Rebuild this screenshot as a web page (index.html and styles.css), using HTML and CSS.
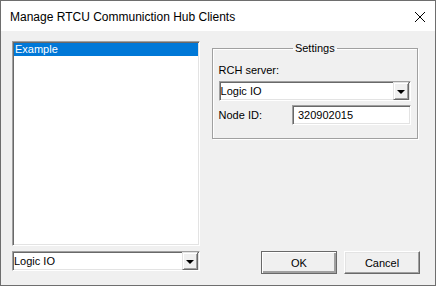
FILE: index.html
```html
<!DOCTYPE html>
<html>
<head>
    <title>Manage RTCU Communiction Hub Clients</title>
    <meta charset=utf-8>
    <link rel="stylesheet" href="styles.css">
</head>
<body>
    <div class="window">
        <div class="titlebar">
            <span class="title">Manage RTCU Communiction Hub Clients</span>
            <svg class="close" width="12" height="12" viewBox="0 0 12 12">
                <path d="M1 1L11 11M11 1L1 11" stroke="#000" stroke-width="1" fill="none"/>
            </svg>
        </div>
        <div class="client">
            <div class="left">
                <div class="listbox">
                    <div class="item selected">Example</div>
                </div>
                <div class="combo">
                    <span class="combo-text">Logic IO</span>
                    <span class="combo-btn"><i class="arrow"></i></span>
                </div>
            </div>
            <div class="right">
                <fieldset class="group">
                    <legend>Settings</legend>
                    <div class="label">RCH server:</div>
                    <div class="combo">
                        <span class="combo-text">Logic IO</span>
                        <span class="combo-btn"><i class="arrow"></i></span>
                    </div>
                    <div class="row">
                        <span class="label">Node ID:</span>
                        <div class="edit">320902015</div>
                    </div>
                </fieldset>
                <div class="buttons">
                    <button class="btn default">OK</button>
                    <button class="btn">Cancel</button>
                </div>
            </div>
        </div>
    </div>
</body>
</html>
```

FILE: styles.css
```css
body{
    margin: 0;
    font-family: "Liberation Sans", Arial, sans-serif;
    font-size: 11px;
    color: #000;
}
.window{
    width: 436px;
    height: 286px;
    box-sizing: border-box;
    border: 1px solid #6e6e6e;
    background: #f0f0f0;
    display: flex;
    flex-direction: column;
}
.titlebar{
    height: 30px;
    background: #fff;
    display: flex;
    align-items: center;
    padding: 0 9px 0 9px;
    flex-shrink: 0;
}
.title{
    font-size: 12px;
    flex: 1;
    padding-top: 1px;
}
.close{
    margin-top: 1px;
}
.client{
    flex: 1;
    display: flex;
    padding: 10px 15px 11px 11px;
    gap: 12px;
}
.left{
    width: 188px;
    display: flex;
    flex-direction: column;
    gap: 5px;
    padding-bottom: 3px;
}
.listbox, .combo, .edit{
    background: #fff;
    box-sizing: border-box;
    border: 1px solid;
    border-color: #a0a0a0 #fff #fff #a0a0a0;
    box-shadow: inset 1px 1px #696969, inset -1px -1px #e3e3e3;
}
.listbox{
    flex: 1;
    padding: 1px 1px;
}
.item{
    height: 13px;
    line-height: 13px;
    padding-left: 1px;
}
.selected{
    background: #0078d7;
    color: #fff;
}
.combo{
    height: 20px;
    display: flex;
    align-items: center;
    padding: 0 1px 0 1px;
}
.combo-text{
    flex: 1;
}
.combo-btn{
    width: 16px;
    height: 18px;
    box-sizing: border-box;
    background: #f0f0f0;
    border: 1px solid;
    border-color: #e3e3e3 #696969 #696969 #e3e3e3;
    box-shadow: inset 1px 1px #fff, inset -1px -1px #a0a0a0;
    display: flex;
    align-items: center;
    justify-content: center;
}
.arrow{
    width: 0;
    height: 0;
    border-left: 4px solid transparent;
    border-right: 4px solid transparent;
    border-top: 4px solid #000;
    margin-top: 1px;
}
.right{
    width: 209px;
    display: flex;
    flex-direction: column;
}
.group{
    margin: 1px 2px 0 0;
    padding: 0 6px 13px 6px;
    border: 1px solid #a0a0a0;
    box-shadow: 1px 1px #fff, inset 1px 1px #fff;
    min-inline-size: 0;
}
.group legend{
    margin: 0 auto;
    padding: 0 2px;
    line-height: 13px;
}
.group .label{
    line-height: 13px;
    margin: 9px 0 4px 0;
}
.row{
    display: flex;
    align-items: center;
    margin-top: 4px;
}
.row .label{
    flex: 1;
    margin: 0;
}
.edit{
    width: 119px;
    height: 20px;
    line-height: 18px;
    padding-left: 5px;
}
.buttons{
    margin-top: auto;
    display: flex;
    justify-content: flex-end;
    gap: 7px;
}
.btn{
    width: 76px;
    height: 23px;
    box-sizing: border-box;
    font-family: "Liberation Sans", Arial, sans-serif;
    font-size: 11px;
    color: #000;
    background: #f0f0f0;
    border: 1px solid;
    border-color: #fff #696969 #696969 #fff;
    box-shadow: inset -1px -1px #a0a0a0, inset 1px 1px #e3e3e3;
    padding: 0;
}
.default{
    border-color: #696969;
    box-shadow: inset 1px 1px #fff, inset -2px -2px #a0a0a0;
}
```
